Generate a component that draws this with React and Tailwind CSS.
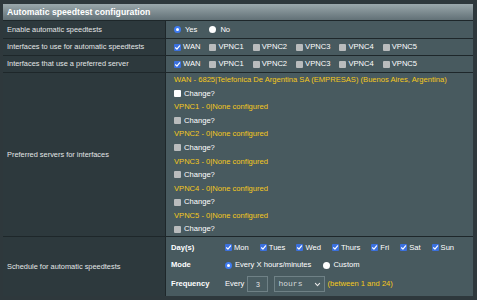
import React from 'react'

/* ───── small form glyphs ───── */

function Box({ state = 'off' }) {
  if (state === 'on') {
    return (
      <span className="inline-flex h-[7px] w-[7px] shrink-0 items-center justify-center rounded-[1px] bg-[#3b70de]">
        <svg viewBox="0 0 10 10" className="h-[7px] w-[7px]">
          <path d="M2.2 5.4 L4.2 7.4 L8 2.6" fill="none" stroke="#fff" strokeWidth="1.7" strokeLinecap="round" strokeLinejoin="round" />
        </svg>
      </span>
    )
  }
  return (
    <span
      className={`inline-block h-[7px] w-[7px] shrink-0 rounded-[1px] ${
        state === 'white' ? 'bg-white' : 'bg-[#b9bcbd]'
      }`}
    />
  )
}

function Radio({ on }) {
  return on ? (
    <span className="inline-block h-[7px] w-[7px] shrink-0 rounded-full border-[2px] border-[#3f7cf2] bg-white" />
  ) : (
    <span className="inline-block h-[7px] w-[7px] shrink-0 rounded-full bg-white" />
  )
}

/* ───── table rows ───── */

function Row({ label, h, children }) {
  return (
    <div className="flex border-t border-[#1e272a]" style={{ height: h }}>
      <div className="flex w-[163px] shrink-0 items-center border-r border-[#1e272a] bg-[#2d393d] pl-[4px] text-[7.4px] text-[#e4e6e7]">
        {label}
      </div>
      <div className="flex flex-1 flex-col justify-center bg-[#485a5f] pl-[8px] text-[7.6px] text-white">
        {children}
      </div>
    </div>
  )
}

const ifaces = ['WAN', 'VPNC1', 'VPNC2', 'VPNC3', 'VPNC4', 'VPNC5']
const days = ['Mon', 'Tues', 'Wed', 'Thurs', 'Fri', 'Sat', 'Sun']

function IfaceList() {
  return (
    <div className="flex items-center">
      {ifaces.map((n, i) => (
        <span key={n} className="mr-[9px] flex items-center gap-[2px]">
          <Box state={i === 0 ? 'on' : 'off'} />
          <span>{n}</span>
        </span>
      ))}
    </div>
  )
}

function ServerLines() {
  const servers = [
    { name: 'WAN - 6825|Telefonica De Argentina SA (EMPRESAS) (Buenos Aires, Argentina)', first: true },
    ...ifaces.slice(1).map((n) => ({ name: `${n} - 0|None configured` })),
  ]
  return (
    <div className="flex flex-col">
      {servers.map((s) => (
        <React.Fragment key={s.name}>
          <div className="flex h-[13.6px] items-center text-[#f5c91c]">{s.name}</div>
          <div className="flex h-[13.6px] items-center gap-[3px]">
            <Box state={s.first ? 'white' : 'off'} />
            <span>Change?</span>
          </div>
        </React.Fragment>
      ))}
    </div>
  )
}

function Schedule() {
  return (
    <div className="-ml-[3px] flex flex-col">
      <div className="flex h-[20px] items-center">
        <span className="w-[54px] font-bold">Day(s)</span>
        {days.map((d) => (
          <span key={d} className="mr-[11px] flex items-center gap-[2px]">
            <Box state="on" />
            <span>{d}</span>
          </span>
        ))}
      </div>
      <div className="flex h-[15px] items-center">
        <span className="w-[54px] font-bold">Mode</span>
        <span className="mr-[12px] flex items-center gap-[3px]">
          <Radio on />
          <span>Every X hours/minutes</span>
        </span>
        <span className="flex items-center gap-[3px]">
          <Radio />
          <span>Custom</span>
        </span>
      </div>
      <div className="flex h-[23px] items-center">
        <span className="w-[54px] font-bold">Frequency</span>
        <span>Every</span>
        <span className="ml-[3px] flex h-[16px] w-[21px] items-center justify-center border border-[#6f8186] bg-[#4b5e63] text-[7px] text-[#e8e8e8]">
          3
        </span>
        <span className="ml-[6px] flex h-[16px] w-[51px] items-center justify-between border border-[#6f8186] bg-[#4b5e63] pl-[3px] pr-[3px]">
          <span className="font-['Liberation_Mono',monospace] text-[8px] text-[#d6d9da]">hours</span>
          <svg viewBox="0 0 10 10" className="h-[7px] w-[7px]">
            <path d="M2 3.5 L5 6.5 L8 3.5" fill="none" stroke="#e8e8e8" strokeWidth="1.6" strokeLinecap="round" strokeLinejoin="round" />
          </svg>
        </span>
        <span className="ml-[2px] text-[#f5c91c]">(between 1 and 24)</span>
      </div>
    </div>
  )
}

/* ───── page ───── */

export default function App() {
  return (
    <div className="h-[300px] w-[477px] bg-[#2e383c] pb-[4px] pl-[3px] pr-[4px] pt-[4px] font-['Liberation_Sans',Arial,sans-serif] leading-none">
      <div className="flex h-[16px] items-center bg-gradient-to-b from-[#9ba8ac] to-[#627177] pl-[4px] text-[8.7px] font-bold text-white">
        Automatic speedtest configuration
      </div>

      <Row label="Enable automatic speedtests" h={18}>
        <div className="flex items-center">
          <span className="mr-[12px] flex items-center gap-[4px]">
            <Radio on />
            <span>Yes</span>
          </span>
          <span className="flex items-center gap-[4px]">
            <Radio />
            <span>No</span>
          </span>
        </div>
      </Row>

      <Row label="Interfaces to use for automatic speedtests" h={17}>
        <IfaceList />
      </Row>

      <Row label="Interfaces that use a preferred server" h={17}>
        <IfaceList />
      </Row>

      <Row label="Preferred servers for interfaces" h={164}>
        <ServerLines />
      </Row>

      <Row label="Schedule for automatic speedtests" h={60}>
        <Schedule />
      </Row>
    </div>
  )
}
